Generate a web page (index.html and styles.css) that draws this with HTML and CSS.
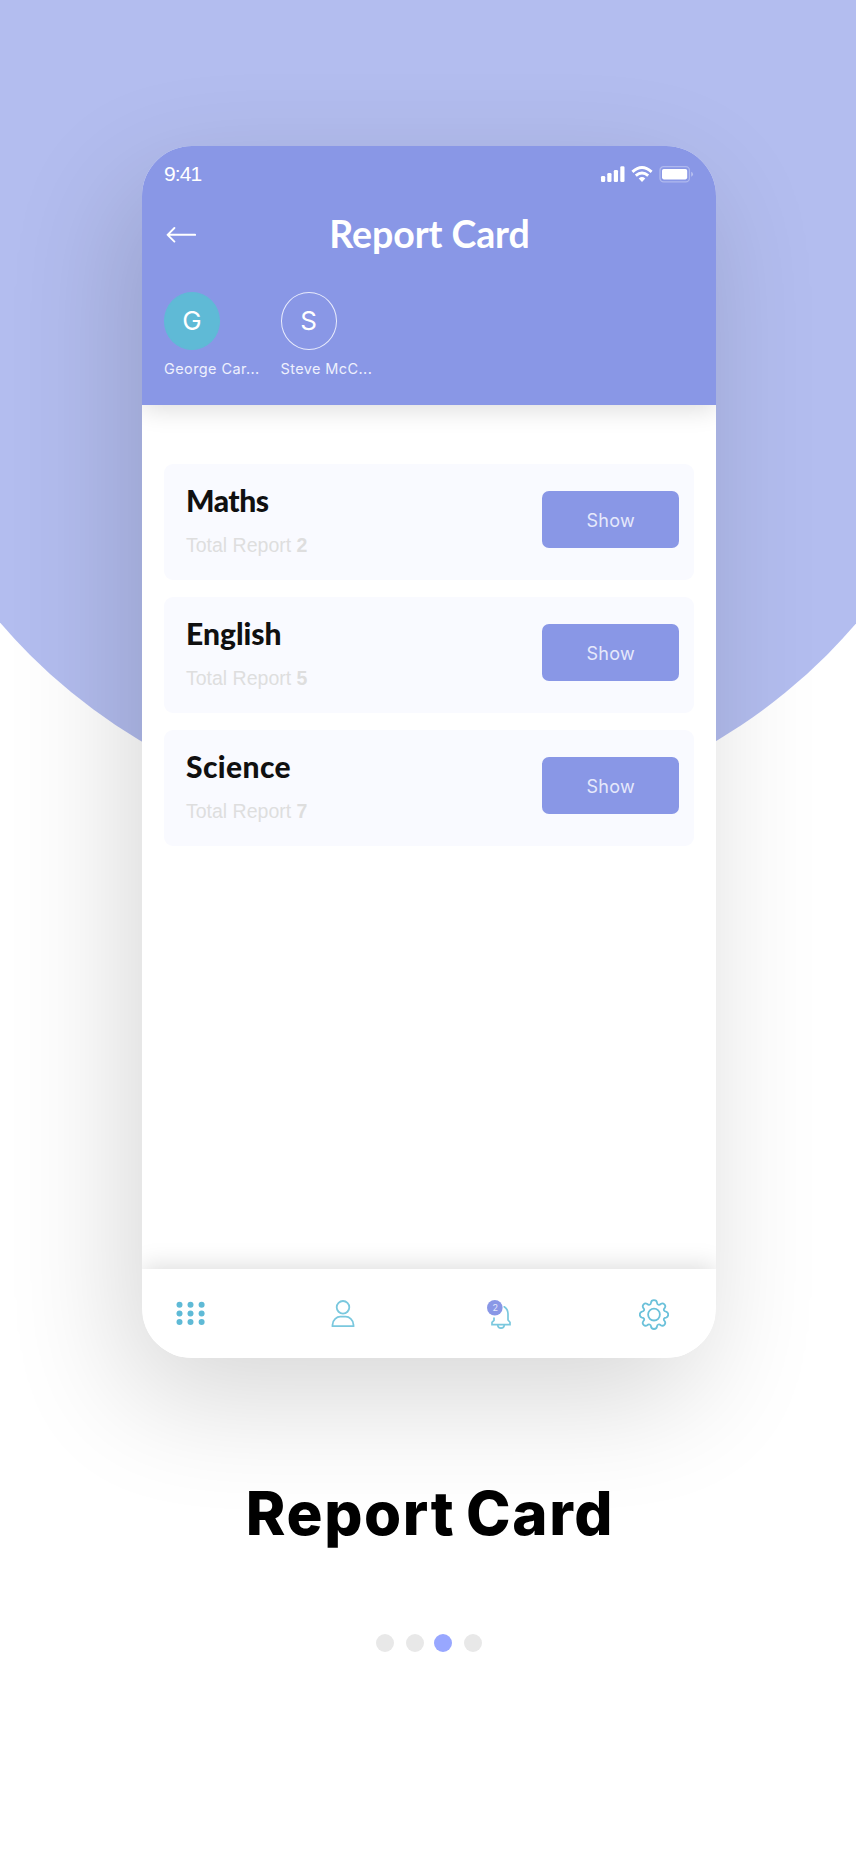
FILE: index.html
```html
<!DOCTYPE html>
<html lang="en">
<head>
<meta charset="utf-8">
<title>Report Card</title>
<link rel="stylesheet" href="styles.css">
</head>
<body>
<main class="page">
  <div class="backdrop"></div>
  <section class="phone">
    <header class="header">
      <div class="status">
        <span class="time">9:41</span>
        <svg class="status-icons" width="94" height="20" viewBox="0 0 94 20" fill="#fff">
          <rect x="1" y="11" width="4.2" height="6" rx="1.3"/>
          <rect x="7.3" y="8" width="4.2" height="9" rx="1.3"/>
          <rect x="13.8" y="5" width="4.2" height="12" rx="1.3"/>
          <rect x="20.3" y="1.3" width="4.2" height="15.7" rx="1.3"/>
          <g fill="none" stroke="#fff" stroke-width="2.9">
            <path d="M32.4 6.8Q42 -1.8 51.6 6.8"/>
            <path d="M35.8 10.6Q42 5.2 48.2 10.6"/>
          </g>
          <path d="M38.7 13.4Q42 10.7 45.3 13.4L42 16.9Z"/>
          <rect x="60" y="1.7" width="29.4" height="15.2" rx="3.6" fill="none" stroke="#fff" stroke-opacity=".32" stroke-width="1.3"/>
          <rect x="62" y="4" width="25.2" height="10.4" rx="1.8"/>
          <path d="M91.2 6.7Q93 7.4 93 9.2T91.2 11.7Z" opacity=".4"/>
        </svg>
      </div>
      <div class="title-row">
        <svg class="back" width="32" height="18" viewBox="0 0 32 18" fill="none" stroke="#fff" stroke-width="1.9" stroke-linecap="round" stroke-linejoin="round">
          <path d="M10.4 3L3.6 9.8L10.4 16.6M3.6 9.8H31.2"/>
        </svg>
        <h1 class="title">Report Card</h1>
      </div>
      <div class="students">
        <div class="student">
          <span class="avatar avatar-active">G</span>
          <span class="name">George Car...</span>
        </div>
        <div class="student">
          <span class="avatar">S</span>
          <span class="name">Steve McC...</span>
        </div>
      </div>
    </header>
    <div class="list">
      <article class="card">
        <div>
          <h2 class="subject maths">Maths</h2>
          <p class="total">Total Report <b>2</b></p>
        </div>
        <button class="show">Show</button>
      </article>
      <article class="card">
        <div>
          <h2 class="subject english">English</h2>
          <p class="total">Total Report <b>5</b></p>
        </div>
        <button class="show">Show</button>
      </article>
      <article class="card">
        <div>
          <h2 class="subject science">Science</h2>
          <p class="total">Total Report <b>7</b></p>
        </div>
        <button class="show">Show</button>
      </article>
    </div>
    <nav class="nav">
      <svg width="30" height="32" viewBox="0 0 30 32" fill="#5fbad6">
        <circle cx="4.5" cy="6.8" r="3"/><circle cx="15.5" cy="6.8" r="3"/><circle cx="26.6" cy="6.8" r="3"/>
        <circle cx="4.5" cy="15.4" r="3"/><circle cx="15.5" cy="15.4" r="3"/><circle cx="26.6" cy="15.4" r="3"/>
        <circle cx="4.5" cy="24" r="3"/><circle cx="15.5" cy="24" r="3"/><circle cx="26.6" cy="24" r="3"/>
      </svg>
      <svg width="30" height="32" viewBox="0 0 30 32" fill="none" stroke="#7ac8de" stroke-width="1.8">
        <circle cx="15" cy="9.3" r="6.3"/>
        <path d="M4.5 28.2V27C4.5 21.7 9 18.7 12.3 18.7H17.7C21 18.7 25.5 21.7 25.5 27V28.2Z"/>
      </svg>
      <svg width="30" height="32" viewBox="0 0 30 32" fill="none" stroke="#7ac8de" stroke-width="1.7" stroke-linecap="round">
        <path d="M22.2 8.8C24.8 10.6 26 12.8 26 15.8V22L28 24.3V26.7H10V24.3L12 22.3V20"/>
        <path d="M15.7 27C16 31.2 22 31.2 22.3 27"/>
        <circle cx="12.8" cy="9.8" r="7.8" fill="#8997e6" stroke="none"/>
        <text class="badge" x="13.2" y="12.9" text-anchor="middle">2</text>
      </svg>
      <svg width="30" height="32" viewBox="0 0 30 32" fill="none" stroke="#6bc1da" stroke-width="1.8" stroke-linejoin="round">
        <circle cx="15" cy="16.6" r="5.9"/>
        <path d="M12 4.8Q12.2 2.2 15 2.2T18 4.8Q18.1 6.3 19.3 6.7Q20.6 7.1 21.7 6Q23.7 4.7 25.4 6.4T25.7 10Q24.5 11.1 24.9 12.3Q25.3 13.5 27 13.6Q29.2 14 29.2 16.6T27 19.6Q25.3 19.7 24.9 20.9Q24.5 22.1 25.7 23.2Q27 25.1 25.4 26.8T21.7 27.2Q20.6 26.1 19.3 26.5Q18.1 26.9 18 28.4Q17.8 31 15 31T12 28.4Q11.9 26.9 10.7 26.5Q9.4 26.1 8.3 27.2Q6.3 28.5 4.6 26.8T4.3 23.2Q5.5 22.1 5.1 20.9Q4.7 19.7 3 19.6Q.8 19.2 .8 16.6T3 13.6Q4.7 13.5 5.1 12.3Q5.5 11.1 4.3 10Q3 8.1 4.6 6.4T8.3 6Q9.4 7.1 10.7 6.7Q11.9 6.3 12 4.8Z"/>
      </svg>
    </nav>
  </section>
  <h2 class="caption">Report Card</h2>
  <div class="dots"><i></i><i></i><i class="on"></i><i></i></div>
</main>
</body>
</html>
```
FILE: styles.css
```css
* { box-sizing: border-box; margin: 0; }
body { background: #fff; font-family: "Liberation Sans", sans-serif; }
.page {
  position: relative;
  height: 1852px;
  overflow: hidden;
  padding: 146px 140px 0 142px;
  display: flex;
  flex-direction: column;
}
.backdrop {
  position: absolute;
  left: -135.5px;
  top: -307px;
  width: 1127px;
  height: 1127px;
  border-radius: 50%;
  background: #b3bdef;
}
.phone {
  position: relative;
  flex: none;
  height: 1212px;
  display: flex;
  flex-direction: column;
  border-radius: 50px;
  background: #fff;
  overflow: hidden;
  box-shadow: -16px 40px 120px rgba(0, 0, 0, .16);
}
.header {
  height: 259px;
  padding: 16px 22px 0;
  background: #8997e6;
  color: #fff;
  box-shadow: 0 4px 24px rgba(0, 0, 0, .14);
}
.status { display: flex; justify-content: space-between; height: 24px; }
.time { font-size: 21px; line-height: 24px; letter-spacing: -.9px; }
.status-icons { margin-right: .5px; margin-top: 3px; }
.title-row { display: flex; align-items: center; height: 50px; margin-top: 23px; }
.back { flex: none; }
.title {
  flex: 1;
  margin-right: 31px;
  text-align: center;
  font: bold 37.5px/50px Lato, sans-serif;
  letter-spacing: -.1px;
}
.students { display: flex; gap: 60.5px; margin-top: 33px; }
.student { width: 56px; }
.avatar {
  display: flex;
  align-items: center;
  justify-content: center;
  width: 56px;
  height: 57.5px;
  border: 1.5px solid #e8ebfc;
  border-radius: 50%;
  font: 26px/1 Inter, sans-serif;
}
.avatar-active { background: #5fbad6; border-color: #5fbad6; }
.name {
  display: block;
  margin-top: 9px;
  white-space: nowrap;
  font: 14.5px/20px Inter, sans-serif;
  letter-spacing: .4px;
  color: #eef0fd;
}
.list {
  flex: 1;
  display: flex;
  flex-direction: column;
  gap: 17px;
  padding: 58.5px 22px 0;
}
.card {
  display: flex;
  justify-content: space-between;
  height: 116px;
  padding: 27px 15px 0 22px;
  border-radius: 9px;
  background: #f9faff;
}
.subject {
  margin-top: -10px;
  font: 900 30px/38px Lato, sans-serif;
  color: #101010;
}
.maths { letter-spacing: -.5px; }
.science { letter-spacing: .4px; }
.total { margin-top: 14px; font-size: 19.5px; line-height: 24px; letter-spacing: 0; color: #dedede; }
.show {
  width: 137.5px;
  height: 57.5px;
  padding: 2px 0 0 1px;
  border: 0;
  border-radius: 7px;
  background: #8997e6;
  color: #e6e9fb;
  font: 18px Inter, sans-serif;
  letter-spacing: .3px;
}
.nav {
  height: 89px;
  padding: 29px 47px 0 33px;
  display: grid;
  grid-template-columns: 153px 154px 157px 30px;
  background: #fff;
  box-shadow: 0 -2px 24px rgba(0, 0, 0, .15);
}
.badge { font: 9px Inter, sans-serif; fill: #e6e9fb; stroke: none; }
.caption {
  position: relative;
  margin: 119px -20px 0 -18px;
  text-align: center;
  white-space: nowrap;
  font: 800 60px/72px Inter, sans-serif;
  letter-spacing: 1.6px;
  word-spacing: -4px;
  color: #000;
}
.dots { display: flex; justify-content: center; gap: 12px; margin-top: 85px; position: relative; }
.dots i { width: 18px; height: 18px; border-radius: 50%; background: #e8e8e8; }
.dots .on { background: #98a7ff; margin-left: -2px; }
```
